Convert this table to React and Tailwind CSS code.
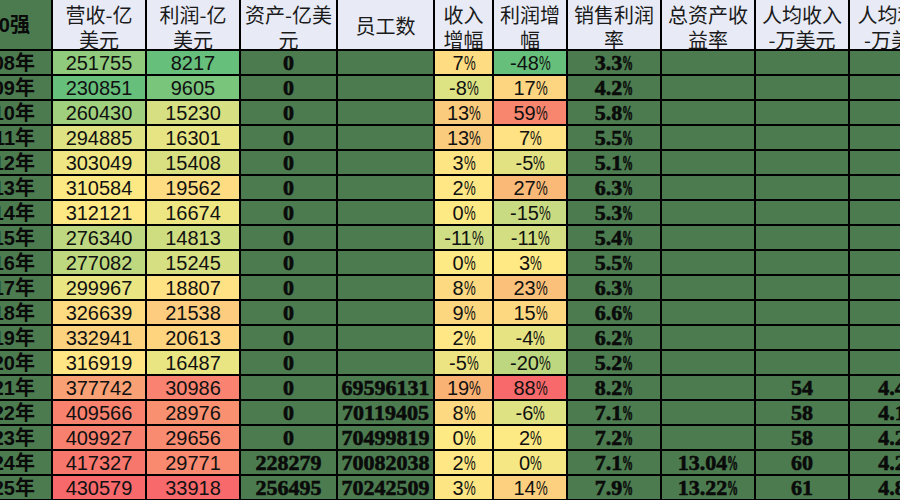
const COLS =
  "grid-cols-[51px_92px_92px_95px_95px_57px_72px_92px_92px_92px_95px] grid-rows-[49px_repeat(18,23px)]";

const rows = [
  { y: "2008年", rev: "251755", rc: "bg-[#90cb7d]", pro: "8217", pc: "bg-[#66bf7b]", asset: "0", emp: "", rg: "7%", rgc: "bg-[#fedd82]", pg: "-48%", pgc: "bg-[#66bf7b]", margin: "3.3%", roa: "", prev: "", pprof: "" },
  { y: "2009年", rev: "230851", rc: "bg-[#66bf7b]", pro: "9605", pc: "bg-[#7ac57c]", asset: "0", emp: "", rg: "-8%", rgc: "bg-[#dde283]", pg: "17%", pgc: "bg-[#fdd480]", margin: "4.2%", roa: "", prev: "", pprof: "" },
  { y: "2010年", rev: "260430", rc: "bg-[#a0d07e]", pro: "15230", pc: "bg-[#d6df82]", asset: "0", emp: "", rg: "13%", rgc: "bg-[#fbcb7d]", pg: "59%", pgc: "bg-[#f8866e]", margin: "5.8%", roa: "", prev: "", pprof: "" },
  { y: "2011年", rev: "294885", rc: "bg-[#dfe282]", pro: "16301", pc: "bg-[#e7e483]", asset: "0", emp: "", rg: "13%", rgc: "bg-[#fbcb7d]", pg: "7%", pgc: "bg-[#fee283]", margin: "5.5%", roa: "", prev: "", pprof: "" },
  { y: "2012年", rev: "303049", rc: "bg-[#efe683]", pro: "15408", pc: "bg-[#d9e082]", asset: "0", emp: "", rg: "3%", rgc: "bg-[#fee584]", pg: "-5%", pgc: "bg-[#e3e283]", margin: "5.1%", roa: "", prev: "", pprof: "" },
  { y: "2013年", rev: "310584", rc: "bg-[#fde984]", pro: "19562", pc: "bg-[#fedc81]", asset: "0", emp: "", rg: "2%", rgc: "bg-[#fee784]", pg: "27%", pgc: "bg-[#fab977]", margin: "6.3%", roa: "", prev: "", pprof: "" },
  { y: "2014年", rev: "312121", rc: "bg-[#fee884]", pro: "16674", pc: "bg-[#eee683]", asset: "0", emp: "", rg: "0%", rgc: "bg-[#feea84]", pg: "-15%", pgc: "bg-[#c9db82]", margin: "5.3%", roa: "", prev: "", pprof: "" },
  { y: "2015年", rev: "276340", rc: "bg-[#bdd880]", pro: "14813", pc: "bg-[#cfdd81]", asset: "0", emp: "", rg: "-11%", rgc: "bg-[#cfdd84]", pg: "-11%", pgc: "bg-[#d3de82]", margin: "5.4%", roa: "", prev: "", pprof: "" },
  { y: "2016年", rev: "277082", rc: "bg-[#bed880]", pro: "15245", pc: "bg-[#d6df82]", asset: "0", emp: "", rg: "0%", rgc: "bg-[#feea84]", pg: "3%", pgc: "bg-[#fee984]", margin: "5.5%", roa: "", prev: "", pprof: "" },
  { y: "2017年", rev: "299967", rc: "bg-[#e9e583]", pro: "18807", pc: "bg-[#ffe283]", asset: "0", emp: "", rg: "8%", rgc: "bg-[#fdd981]", pg: "23%", pgc: "bg-[#fbc079]", margin: "6.3%", roa: "", prev: "", pprof: "" },
  { y: "2018年", rev: "326639", rc: "bg-[#fedb81]", pro: "21538", pc: "bg-[#fdcc7e]", asset: "0", emp: "", rg: "9%", rgc: "bg-[#fdd780]", pg: "15%", pgc: "bg-[#fed880]", margin: "6.6%", roa: "", prev: "", pprof: "" },
  { y: "2019年", rev: "332941", rc: "bg-[#fdd27f]", pro: "20613", pc: "bg-[#fed47f]", asset: "0", emp: "", rg: "2%", rgc: "bg-[#fee784]", pg: "-4%", pgc: "bg-[#e6e383]", margin: "6.2%", roa: "", prev: "", pprof: "" },
  { y: "2020年", rev: "316919", rc: "bg-[#ffe583]", pro: "16487", pc: "bg-[#eae583]", asset: "0", emp: "", rg: "-5%", rgc: "bg-[#ece483]", pg: "-20%", pgc: "bg-[#bcd780]", margin: "5.2%", roa: "", prev: "", pprof: "" },
  { y: "2021年", rev: "377742", rc: "bg-[#f9a174]", pro: "30986", pc: "bg-[#f98370]", asset: "0", emp: "69596131", rg: "19%", rgc: "bg-[#f9b274]", pg: "88%", pgc: "bg-[#f8696b]", margin: "8.2%", roa: "", prev: "54", pprof: "4.45" },
  { y: "2022年", rev: "409566", rc: "bg-[#f8826e]", pro: "28976", pc: "bg-[#f99171]", asset: "0", emp: "70119405", rg: "8%", rgc: "bg-[#fdd981]", pg: "-6%", pgc: "bg-[#dfe283]", margin: "7.1%", roa: "", prev: "58", pprof: "4.13" },
  { y: "2023年", rev: "409927", rc: "bg-[#f8806e]", pro: "29656", pc: "bg-[#f98b70]", asset: "0", emp: "70499819", rg: "0%", rgc: "bg-[#feea84]", pg: "2%", pgc: "bg-[#fdea84]", margin: "7.2%", roa: "", prev: "58", pprof: "4.21" },
  { y: "2024年", rev: "417327", rc: "bg-[#f8776d]", pro: "29771", pc: "bg-[#f98a70]", asset: "228279", emp: "70082038", rg: "2%", rgc: "bg-[#fee784]", pg: "0%", pgc: "bg-[#f5e884]", margin: "7.1%", roa: "13.04%", prev: "60", pprof: "4.25" },
  { y: "2025年", rev: "430579", rc: "bg-[#f8696b]", pro: "33918", pc: "bg-[#f8696b]", asset: "256495", emp: "70242509", rg: "3%", rgc: "bg-[#fee584]", pg: "14%", pgc: "bg-[#fcd07f]", margin: "7.9%", roa: "13.22%", prev: "61", pprof: "4.83" },
];

const headers = [
  ["营收-亿", "美元"],
  ["利润-亿", "美元"],
  ["资产-亿美", "元"],
  ["员工数"],
  ["收入", "增幅"],
  ["利润增", "幅"],
  ["销售利润", "率"],
  ["总资产收", "益率"],
  ["人均收入", "-万美元"],
  ["人均利润", "-万美元"],
];

// excel's percent sign comes out narrow, squeeze it
function Val({ v, bold }) {
  if (!v.endsWith("%")) return v;
  return (
    <>
      {v.slice(0, -1)}
      <span
        className={
          "inline-block w-[11px] origin-left " +
          (bold ? "scale-x-[0.5]" : "scale-x-[0.66]")
        }
      >
        %
      </span>
    </>
  );
}

function Heat({ v, bg }) {
  return (
    <div
      className={
        "flex items-center justify-center overflow-hidden whitespace-nowrap leading-none font-['Liberation_Sans',sans-serif] text-[20px] text-[#111] " +
        bg
      }
    >
      <Val v={v} />
    </div>
  );
}

function Bold({ v }) {
  return (
    <div className="flex items-center justify-center overflow-hidden whitespace-nowrap leading-none bg-[#4b7b4f] font-['Liberation_Serif',serif] text-[22px] font-bold text-[#0a0a0a] [-webkit-text-stroke:0.6px_#0a0a0a]">
      <Val v={v} bold />
    </div>
  );
}

export default function App() {
  return (
    <div className="w-[900px] h-[500px] overflow-hidden bg-black">
      <div className={"grid w-max gap-[2px] bg-black " + COLS}>
        <div className="flex items-center justify-end pr-[21px] overflow-hidden whitespace-nowrap leading-none bg-[#4b7b4f] font-['Liberation_Sans','Noto_Sans_CJK_SC',sans-serif] text-[20px] font-bold text-[#0a0a0a]">
          500强
        </div>
        {headers.map((h, i) => (
          <div
            key={i}
            className={
              "flex flex-col items-center overflow-hidden whitespace-nowrap bg-[#e8ebf6] font-['Noto_Sans_CJK_SC',sans-serif] text-[20px] leading-[25px] text-[#1a1a1a] " +
              (h.length === 1 ? "pt-[13px]" : "pt-[2px]")
            }
          >
            {h.map((line, j) => (
              <div key={j}>{line}</div>
            ))}
          </div>
        ))}

        {rows.map((r) => (
          <div key={r.y} className="contents">
            <div className="flex items-center justify-end pr-[16px] overflow-hidden whitespace-nowrap leading-none bg-[#4b7b4f] font-['Liberation_Sans','Noto_Sans_CJK_SC',sans-serif] text-[20px] font-bold text-[#0a0a0a]">
              {r.y}
            </div>
            <Heat v={r.rev} bg={r.rc} />
            <Heat v={r.pro} bg={r.pc} />
            <Bold v={r.asset} />
            <Bold v={r.emp} />
            <Heat v={r.rg} bg={r.rgc} />
            <Heat v={r.pg} bg={r.pgc} />
            <Bold v={r.margin} />
            <Bold v={r.roa} />
            <Bold v={r.prev} />
            <Bold v={r.pprof} />
          </div>
        ))}
      </div>
    </div>
  );
}
